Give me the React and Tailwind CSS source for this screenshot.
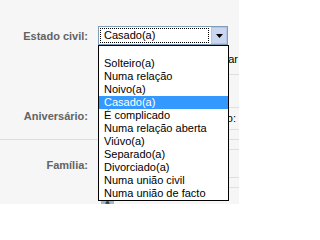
import React from "react";

const items = [
  "",
  "Solteiro(a)",
  "Numa relação",
  "Noivo(a)",
  "Casado(a)",
  "É complicado",
  "Numa relação aberta",
  "Viúvo(a)",
  "Separado(a)",
  "Divorciado(a)",
  "Numa união civil",
  "Numa união de facto",
];

function Label({ children, className = "" }) {
  return (
    <div className={"w-[88px] shrink-0 text-right font-bold text-[#636363] " + className}>
      {children}
    </div>
  );
}

export default function App() {
  return (
    <div className="w-[239px] h-[204px] overflow-hidden bg-[#f6f6f6] font-['Liberation_Sans',Arial,sans-serif] text-[11px] leading-[13px] text-black">
      <div className="h-[26px]" />
      {/* Estado civil row */}
      <div className="flex h-[19px] items-center">
        <Label className="pt-[1px]">Estado civil:</Label>
        <div className="relative ml-[10px] h-[19px] w-[130px]">
          <div className="flex h-full w-full border border-[#7f9db9] bg-white">
            <div className="my-[1px] ml-[1px] mr-[2px] flex flex-1 items-center border border-dotted border-black pl-[3px]">
              Casado(a)
            </div>
            <div className="flex w-[16px] items-center justify-center border border-[#b4c4e4] bg-[#c9d6ef]">
              <svg width="7" height="4" viewBox="0 0 7 4">
                <path d="M0 0H7L3.5 4Z" fill="#000" />
              </svg>
            </div>
          </div>
          {/* Open dropdown list */}
          <div className="absolute left-0 top-[19px] z-10 w-[131px] border border-black bg-white">
            {items.map((t, i) => (
              <div
                key={i}
                className={
                  (i === 0 ? "h-[11px] " : "h-[13px] ") +
                  "whitespace-nowrap pl-[5px] leading-[13px] " +
                  (i === 4 ? "bg-[#3399ff] text-white" : "")
                }
              >
                {t}
              </div>
            ))}
          </div>
        </div>
      </div>
      {/* row partly hidden behind the list */}
      <div className="flex h-[30px]">
        <Label />
        <div className="ml-[10px] flex flex-1 justify-end border-b border-[#e0e0e0] pt-[8px] pr-[1px]">
          <span>ar</span>
        </div>
      </div>
      <div className="h-[32px]" />
      {/* Aniversário row */}
      <div className="flex h-[23px]">
        <Label className="pt-[3px]">Aniversário:</Label>
        <div className="ml-[10px] flex flex-1 justify-end border-y border-[#e0e0e0] pt-[4px] pr-[3px]">
          <span>o:</span>
        </div>
      </div>
      <div className="h-[9px]" />
      <div className="border-t border-[#dedede]" />
      {/* Família section */}
      <div className="flex h-[10px]">
        <Label />
        <div className="ml-[10px] flex-1 border-b border-[#e0e0e0]" />
      </div>
      <div className="flex h-[28px]">
        <Label className="pt-[9px]">Família:</Label>
        <div className="ml-[10px] flex-1 border-b border-[#e0e0e0]" />
      </div>
      <div className="flex h-[10px]">
        <Label />
        <div className="ml-[10px] flex-1 border-b border-[#e0e0e0]" />
      </div>
      <div className="flex">
        <Label />
        <div className="ml-[13px] mt-[13px]">
          <svg width="13" height="13" viewBox="0 0 13 13">
            <rect width="13" height="13" fill="#a7b5c7" />
            <circle cx="6.5" cy="2" r="2" fill="#3d4654" />
            <path d="M2 13c0-4 2-6 4.5-6S11 9 11 13Z" fill="#3d4654" />
          </svg>
        </div>
      </div>
    </div>
  );
}
